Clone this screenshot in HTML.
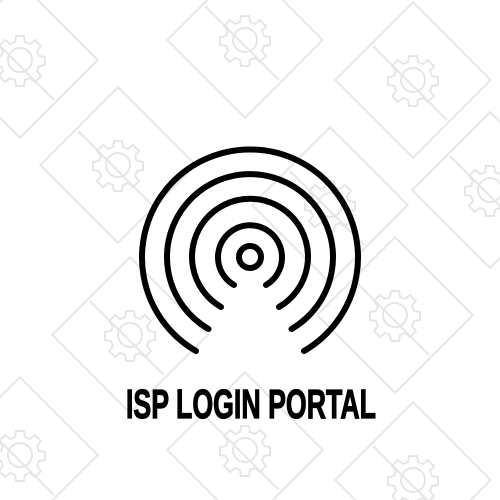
<!DOCTYPE html>
<html><head><meta charset="utf-8"><style>
html,body{margin:0;padding:0;background:#fff;width:500px;height:500px;overflow:hidden}
svg{display:block}
</style></head><body>
<svg width="500" height="500" viewBox="0 0 500 500" xmlns="http://www.w3.org/2000/svg">
<defs>
<g id="t" fill="none" stroke="#e6e6e6" stroke-width="2">
<rect x="-55" y="-55" width="110" height="110" transform="rotate(45)"/>
<line x1="-40" y1="-34" x2="34" y2="40"/>
<g>
<circle r="12"/>
<path d="M-4,-24 h8 l1,6 l5,2 l5,-4 l6,6 l-4,5 l2,5 l6,1 v8 l-6,1 l-2,5 l4,5 l-6,6 l-5,-4 l-5,2 l-1,6 h-8 l-1,-6 l-5,-2 l-5,4 l-6,-6 l4,-5 l-2,-5 l-6,-1 v-8 l6,-1 l2,-5 l-4,-5 l6,-6 l5,4 l5,-2 z"/>
</g>
</g>
</defs>
<g>
<use href="#t" x="20" y="60"/>
<use href="#t" x="245" y="40"/>
<use href="#t" x="413" y="80"/>
<use href="#t" x="118" y="165"/>
<use href="#t" x="330" y="205"/>
<use href="#t" x="490" y="190"/>
<use href="#t" x="130" y="335"/>
<use href="#t" x="395" y="315"/>
<use href="#t" x="20" y="455"/>
<use href="#t" x="245" y="450"/>
<use href="#t" x="413" y="480"/>
</g>
<g fill="none" stroke="#000" stroke-width="6" stroke-linecap="round">
<circle cx="250" cy="257" r="11"/>
<path d="M234,285 A32,32 0 1 1 266,285"/>
<path d="M221,307 A58,58 0 1 1 279,307"/>
<path d="M208.5,329 A83,83 0 1 1 291.5,329"/>
<path d="M196,351 A108,108 0 1 1 304,351"/>
</g>
<text x="126" y="418" textLength="250" lengthAdjust="spacingAndGlyphs" font-family="Liberation Sans, sans-serif" font-weight="bold" font-size="41" fill="#000" stroke="#000" stroke-width="1.2">ISP LOGIN PORTAL</text>
</svg>
</body></html>
